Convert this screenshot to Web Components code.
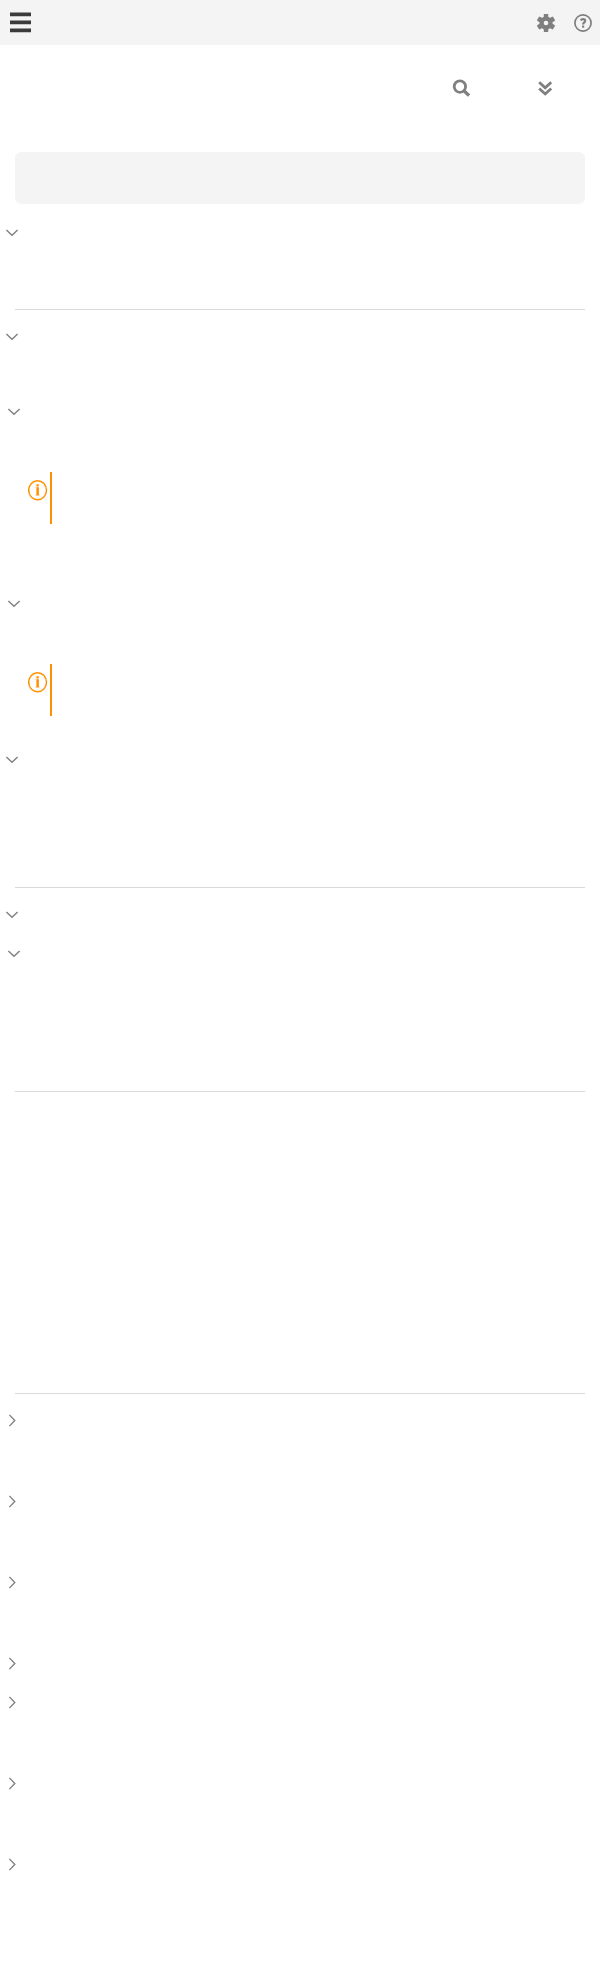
<!DOCTYPE html>
<html lang="en">
<head>
<meta charset="utf-8">
<title>Navigation</title>
<style>
body { margin: 0; background: #fff; font-family: "Open Sans", sans-serif; }
</style>
</head>
<body>
<app-page></app-page>
<script>
const define = (name, html, setup) => customElements.define(name, class extends HTMLElement {
  connectedCallback() {
    if (this.shadowRoot) return;
    const t = document.createElement('template');
    t.innerHTML = html;
    this.attachShadow({ mode: 'open' }).append(t.content.cloneNode(true));
    if (setup) setup(this);
  }
});

define('top-bar', `
<style>
:host { display: flex; height: 45px; background: #f4f4f4; justify-content: space-between; box-sizing: border-box; padding: 0 8px 0 10px; align-items: center; }
svg { display: block; }
.right { display: flex; gap: 19px; padding-top: 1px; }
</style>
<svg width="21" height="23" fill="#3b3b3b"><path d="M0 1.6h21v3.7H0zM0 9.6h21v3.7H0zM0 17.6h21v3.7H0z"/></svg>
<div class="right">
  <svg width="18" height="18" viewBox="-9 -9 18 18">
    <g fill="#7f7f7f">
      <circle r="6.6"/>
      <rect x="-2.2" y="-9" width="4.4" height="18" rx=".6"/>
      <rect x="-2.5" y="-9.2" width="5" height="18.4" rx=".8" transform="rotate(60)"/>
      <rect x="-2.5" y="-9.2" width="5" height="18.4" rx=".8" transform="rotate(120)"/>
    </g>
    <circle r="2.3" fill="#f4f4f4"/>
  </svg>
  <svg width="18" height="18" viewBox="0 0 18 18" fill="none" stroke="#7f7f7f">
    <circle cx="9" cy="9" r="8.1" stroke-width="1.7"/>
    <path d="M6.6 6.3C7.2 5.4 8 5.1 9 5.1c1.3 0 2.2.7 2.2 1.8 0 1.5-2.1 1.6-2.1 3.5" stroke-width="2.1"/>
    <path d="M8 11.5h2.2v2.2H8z" fill="#7f7f7f" stroke="none"/>
  </svg>
</div>`);

define('tool-row', `
<style>
:host { display: flex; height: 107px; box-sizing: border-box; padding: 34px 47px 0 0; justify-content: flex-end; gap: 67px; }
svg { display: block; }
</style>
<svg width="18" height="18" viewBox="0 0 18 18" fill="none" stroke="#7f7f7f"><circle cx="7.9" cy="7.6" r="5.7" stroke-width="2.8"/><path d="M12.2 12l4.8 4.6" stroke-width="3.2"/></svg>
<svg width="16" height="18" viewBox="0 0 16 18" fill="none" stroke="#7f7f7f" stroke-width="2.7"><path d="M2.2 3.2L8.2 8.8l6-5.6M2.2 9.4l6 5.6 6-5.6"/></svg>`);

define('tree-item', `
<style>
:host { display: block; box-sizing: border-box; min-height: 39px; padding-left: 5px; }
:host([nested]) { padding-left: 7px; }
.head { display: flex; height: 39px; box-sizing: border-box; padding-bottom: 2px; align-items: center; }
svg { display: block; }
:host([collapsed]) svg { transform: rotate(-90deg); }
</style>
<div class="head"><svg width="14" height="15" viewBox="0 0 14 15" fill="none" stroke="#7f7f7f" stroke-width="1.35"><path d="M1.4 4.9L7 10.3l5.6-5.4"/></svg></div>
<slot></slot>`, el => { el.style.height = el.getAttribute('size') + 'px'; });

define('info-note', `
<style>
:host { display: flex; box-sizing: border-box; width: 24px; height: 52px; margin: 40px 0 0 21px; border-right: 2px solid #ff9100; padding-top: 8px; }
svg { display: block; flex: none; }
</style>
<svg width="20" height="21" viewBox="0 0 20 21"><ellipse cx="9.6" cy="10.3" rx="8.9" ry="9.5" fill="none" stroke="#ff9100" stroke-width="1.45"/><path d="M8.4 4.2h2.4v2.2H8.4zM8.4 7.3h2.5v8.2H8.4z" fill="#ff9100"/><path d="M7.6 7.3h.8v1h-.8zM7.6 14.6h.8v.9h-.8zM10.9 14.6h.6v.9h-.6z" fill="#ff9100" opacity=".7"/></svg>`);

define('rule-line', `<style>:host { display: block; height: 1px; background: #d9d9d9; margin: 0 15px 8px; }</style>`);
define('panel-box', `<style>:host { display: block; height: 52px; border-radius: 6px; background: #f4f4f4; margin: 0 15px 10px; }</style>`);
define('blank-area', `<style>:host { display: block; }</style><slot></slot>`, el => { el.style.height = el.getAttribute('size') + 'px'; });

define('app-page', `
<style>:host { display: flow-root; height: 1974px; overflow: hidden; }</style>
<top-bar></top-bar>
<tool-row></tool-row>
<panel-box></panel-box>
<tree-item size="95"></tree-item>
<rule-line></rule-line>
<tree-item size="75"></tree-item>
<tree-item nested size="192"><info-note></info-note></tree-item>
<tree-item nested size="156"><info-note></info-note></tree-item>
<tree-item size="146"></tree-item>
<rule-line></rule-line>
<tree-item size="39"></tree-item>
<tree-item nested size="156"></tree-item>
<rule-line></rule-line>
<blank-area size="293"></blank-area>
<rule-line></rule-line>
<tree-item collapsed size="81"></tree-item>
<tree-item collapsed size="81"></tree-item>
<tree-item collapsed size="81"></tree-item>
<tree-item collapsed size="39"></tree-item>
<tree-item collapsed size="81"></tree-item>
<tree-item collapsed size="81"></tree-item>
<tree-item collapsed size="128"></tree-item>`);
</script>
</body>
</html>
